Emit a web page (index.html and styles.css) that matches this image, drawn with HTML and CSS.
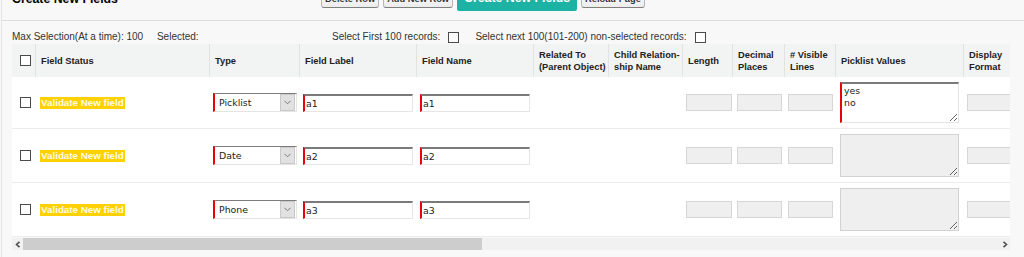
FILE: index.html
```html
<!DOCTYPE html>
<html lang="en">
<head>
    <meta charset="UTF-8">
    <title>Create New Fields</title>
    <link rel="stylesheet" href="styles.css">
</head>
<body>
    <div class="page">
        <div class="page-head">
            <h2 class="page-title">Create New Fields</h2>
            <div class="btn-group">
                <button class="btn">Delete Row</button>
                <button class="btn">Add New Row</button>
                <button class="btn btn-primary">Create New Fields</button>
                <button class="btn">Reload Page</button>
            </div>
        </div>

        <div class="sel-bar">
            <div class="sel-info">
                <span>Max Selection(At a time): 100</span>
                <span class="sel-count">Selected:</span>
            </div>
            <label class="sel-opt">Select First 100 records: <input type="checkbox" class="cb"></label>
            <label class="sel-opt">Select next 100(101-200) non-selected records: <input type="checkbox" class="cb"></label>
        </div>

        <div class="grid-wrap">
            <table class="grid">
                <colgroup>
                    <col class="c-check">
                    <col class="c-status">
                    <col class="c-type">
                    <col class="c-label">
                    <col class="c-name">
                    <col class="c-related">
                    <col class="c-child">
                    <col class="c-length">
                    <col class="c-decimal">
                    <col class="c-lines">
                    <col class="c-picklist">
                    <col class="c-format">
                </colgroup>
                <thead>
                    <tr>
                        <th class="th-check"><input type="checkbox" class="cb"></th>
                        <th>Field Status</th>
                        <th>Type</th>
                        <th>Field Label</th>
                        <th>Field Name</th>
                        <th>Related To<br>(Parent Object)</th>
                        <th>Child Relation-<br>ship Name</th>
                        <th>Length</th>
                        <th>Decimal<br>Places</th>
                        <th># Visible<br>Lines</th>
                        <th>Picklist Values</th>
                        <th>Display<br>Format</th>
                    </tr>
                </thead>
                <tbody>
                    <tr>
                        <td class="td-check"><input type="checkbox" class="cb"></td>
                        <td class="td-status"><span class="status">Validate New field</span></td>
                        <td>
                            <div class="select-box">
                                <span class="select-text">Picklist</span>
                                <span class="select-arrow"><svg width="7" height="5" viewBox="0 0 7 5"><polyline points="0.5,0.8 3.5,3.8 6.5,0.8" fill="none" stroke="#777" stroke-width="1"/></svg></span>
                            </div>
                        </td>
                        <td><input type="text" class="req-input" value="a1"></td>
                        <td><input type="text" class="req-input" value="a1"></td>
                        <td></td>
                        <td></td>
                        <td><input type="text" class="off-input w-len" disabled></td>
                        <td class="td-dec"><input type="text" class="off-input w-dec" disabled></td>
                        <td><input type="text" class="off-input w-dec" disabled></td>
                        <td class="td-pick"><textarea class="pick-area">yes
no</textarea></td>
                        <td><input type="text" class="off-input w-fmt" disabled></td>
                    </tr>
                    <tr>
                        <td class="td-check"><input type="checkbox" class="cb"></td>
                        <td class="td-status"><span class="status">Validate New field</span></td>
                        <td>
                            <div class="select-box">
                                <span class="select-text">Date</span>
                                <span class="select-arrow"><svg width="7" height="5" viewBox="0 0 7 5"><polyline points="0.5,0.8 3.5,3.8 6.5,0.8" fill="none" stroke="#777" stroke-width="1"/></svg></span>
                            </div>
                        </td>
                        <td><input type="text" class="req-input" value="a2"></td>
                        <td><input type="text" class="req-input" value="a2"></td>
                        <td></td>
                        <td></td>
                        <td><input type="text" class="off-input w-len" disabled></td>
                        <td class="td-dec"><input type="text" class="off-input w-dec" disabled></td>
                        <td><input type="text" class="off-input w-dec" disabled></td>
                        <td class="td-pick"><textarea class="pick-area pick-off" disabled></textarea></td>
                        <td><input type="text" class="off-input w-fmt" disabled></td>
                    </tr>
                    <tr>
                        <td class="td-check"><input type="checkbox" class="cb"></td>
                        <td class="td-status"><span class="status">Validate New field</span></td>
                        <td>
                            <div class="select-box">
                                <span class="select-text">Phone</span>
                                <span class="select-arrow"><svg width="7" height="5" viewBox="0 0 7 5"><polyline points="0.5,0.8 3.5,3.8 6.5,0.8" fill="none" stroke="#777" stroke-width="1"/></svg></span>
                            </div>
                        </td>
                        <td><input type="text" class="req-input" value="a3"></td>
                        <td><input type="text" class="req-input" value="a3"></td>
                        <td></td>
                        <td></td>
                        <td><input type="text" class="off-input w-len" disabled></td>
                        <td class="td-dec"><input type="text" class="off-input w-dec" disabled></td>
                        <td><input type="text" class="off-input w-dec" disabled></td>
                        <td class="td-pick"><textarea class="pick-area pick-off" disabled></textarea></td>
                        <td><input type="text" class="off-input w-fmt" disabled></td>
                    </tr>
                </tbody>
            </table>
        </div>

        <div class="hscroll">
            <span class="hs-arrow"><svg width="6" height="7" viewBox="0 0 6 7"><polyline points="4.5,0.8 1.5,3.5 4.5,6.2" fill="none" stroke="#505050" stroke-width="1.6"/></svg></span>
            <span class="hs-thumb"></span>
            <span class="hs-track"></span>
            <span class="hs-arrow"><svg width="6" height="7" viewBox="0 0 6 7"><polyline points="1.5,0.8 4.5,3.5 1.5,6.2" fill="none" stroke="#505050" stroke-width="1.6"/></svg></span>
        </div>
    </div>
</body>
</html>
```

FILE: styles.css
```css
body {
    margin: 0;
    background-color: #f8f8f8;
    font-family: "Liberation Sans", Arial, sans-serif;
    font-size: 10px;
    color: #333;
    overflow: hidden;
}
.page {
    margin-left: 1px;
    border-left: 1px solid #e4e4e4;
    padding-left: 10px;
    padding-bottom: 10px;
}
/* items are taller than the bar, so they run off the top edge like the scrolled original */
.page-head {
    display: flex;
    align-items: flex-end;
    height: 20px;
    margin-left: -10px;
    padding-left: 10px;
    border-bottom: 1px solid #dcdcdc;
}
.page-title {
    flex: 0 0 309px;
    margin: 0 0 14px 0;
    font-size: 12.3px;
    line-height: 14px;
    font-weight: bold;
    color: #000;
}
.btn-group {
    display: flex;
    align-items: flex-end;
    gap: 4px;
}
.btn {
    font-family: "Liberation Sans", Arial, sans-serif;
    font-size: 9.3px;
    font-weight: bold;
    color: #333;
    line-height: 12px;
    padding: 2px 3px;
    margin-bottom: 12px;
    border: 1px solid #b5b5b5;
    border-bottom-color: #7f7f7f;
    border-radius: 3px;
    background: linear-gradient(#ffffff, #ececec);
    flex-shrink: 0;
}
.btn-primary {
    font-size: 12.3px;
    line-height: 14px;
    color: #fff;
    padding: 6px 7px;
    margin-bottom: 9px;
    border: none;
    border-radius: 2px;
    background: #1db3a4;
}
.sel-bar {
    display: flex;
    align-items: center;
    height: 14px;
    padding: 9px 0 0 0;
    line-height: 14px;
}
.sel-info {
    flex: 0 0 320px;
}
.sel-count {
    margin-left: 11px;
}
.sel-opt {
    display: flex;
    align-items: center;
    margin-right: 16px;
}
.sel-opt .cb {
    margin-left: 8px;
}
.cb {
    appearance: none;
    -webkit-appearance: none;
    width: 11px;
    height: 11px;
    margin: 0;
    border: 1px solid #4a4a4a;
    background: #fff;
    box-sizing: border-box;
}
.grid-wrap {
    width: 998px;
    overflow: hidden;
    background: #fff;
}
.grid {
    table-layout: fixed;
    width: 1031px;
    border-collapse: separate;
    border-spacing: 0;
}
.c-check { width: 23px; }
.c-status { width: 174px; }
.c-type { width: 90px; }
.c-label { width: 117px; }
.c-name { width: 117px; }
.c-related { width: 75px; }
.c-child { width: 74px; }
.c-length { width: 50px; }
.c-decimal { width: 52px; }
.c-lines { width: 51px; }
.c-picklist { width: 128px; }
.c-format { width: 80px; }
.grid th {
    height: 33px;
    box-sizing: border-box;
    padding: 0 0 0 5px;
    background: #f2f3f3;
    border-left: 1px solid #e2e2e2;
    font-size: 9.3px;
    line-height: 12px;
    font-weight: bold;
    color: #222;
    text-align: left;
    vertical-align: middle;
    white-space: nowrap;
}
.grid th.th-check {
    border-left: none;
    padding-left: 8px;
}
.th-check .cb,
.td-check .cb {
    display: block;
}
.grid td {
    padding: 5px 0 5px 4px;
    border-bottom: 1px solid #ececec;
    vertical-align: middle;
}
.grid td.td-check {
    padding-left: 8px;
}
.grid td.td-status {
    padding-left: 5px;
}
.grid td.td-dec,
.grid td.td-pick {
    padding-left: 5px;
}
.status {
    display: inline-block;
    background: #ffd100;
    color: #fffbe6;
    font-weight: bold;
    font-size: 9.8px;
    line-height: 12px;
    padding: 0 1px;
}
.select-box {
    display: flex;
    align-items: center;
    width: 84px;
    height: 19px;
    box-sizing: border-box;
    border: 1px solid #e4e4e4;
    border-top-color: #7d7d7d;
    border-left: 2px solid #e8000b;
    background: #fff;
    font-family: "DejaVu Sans", sans-serif;
    font-size: 9.4px;
    color: #222;
}
.select-text {
    flex: 1;
    padding-left: 4px;
}
.select-arrow {
    display: flex;
    align-items: center;
    justify-content: center;
    width: 13px;
    height: 15px;
    margin-right: 1px;
    background: #e1e1e1;
    border: 1px solid #c9c9c9;
}
.req-input {
    display: block;
    width: 110px;
    height: 18px;
    box-sizing: border-box;
    padding: 0 1px;
    border: 1px solid #e6e6e6;
    border-top: 2px solid #7a7a7a;
    border-left: 2px solid #e8000b;
    font-family: "DejaVu Sans", sans-serif;
    font-size: 9.4px;
    color: #222;
    outline: none;
}
.off-input {
    display: block;
    height: 17px;
    box-sizing: border-box;
    border: 1px solid #d6d6d6;
    background: #efefef;
    padding: 0;
}
.w-len { width: 46px; }
.w-dec { width: 45px; }
.w-fmt { width: 60px; }
.pick-area {
    display: block;
    width: 119px;
    height: 41px;
    box-sizing: border-box;
    margin: 0;
    padding: 1px 2px;
    border: 1px solid #e4e4e4;
    border-top: 2px solid #7a7a7a;
    border-left: 2px solid #e8000b;
    font-family: "DejaVu Sans", sans-serif;
    font-size: 9.4px;
    line-height: 12px;
    color: #222;
    background: #fff;
    outline: none;
}
.pick-off {
    height: 43px;
    border: 1px solid #d2d2d2;
    background: #efefef;
}
.hscroll {
    display: flex;
    align-items: center;
    width: 998px;
    height: 12px;
    margin-top: 1px;
    background: #f1f1f1;
}
.hs-arrow {
    display: flex;
    align-items: center;
    justify-content: center;
    width: 11px;
    height: 12px;
}
.hs-thumb {
    width: 459px;
    height: 12px;
    background: #cdcdcd;
}
.hs-track {
    flex: 1;
}
```
